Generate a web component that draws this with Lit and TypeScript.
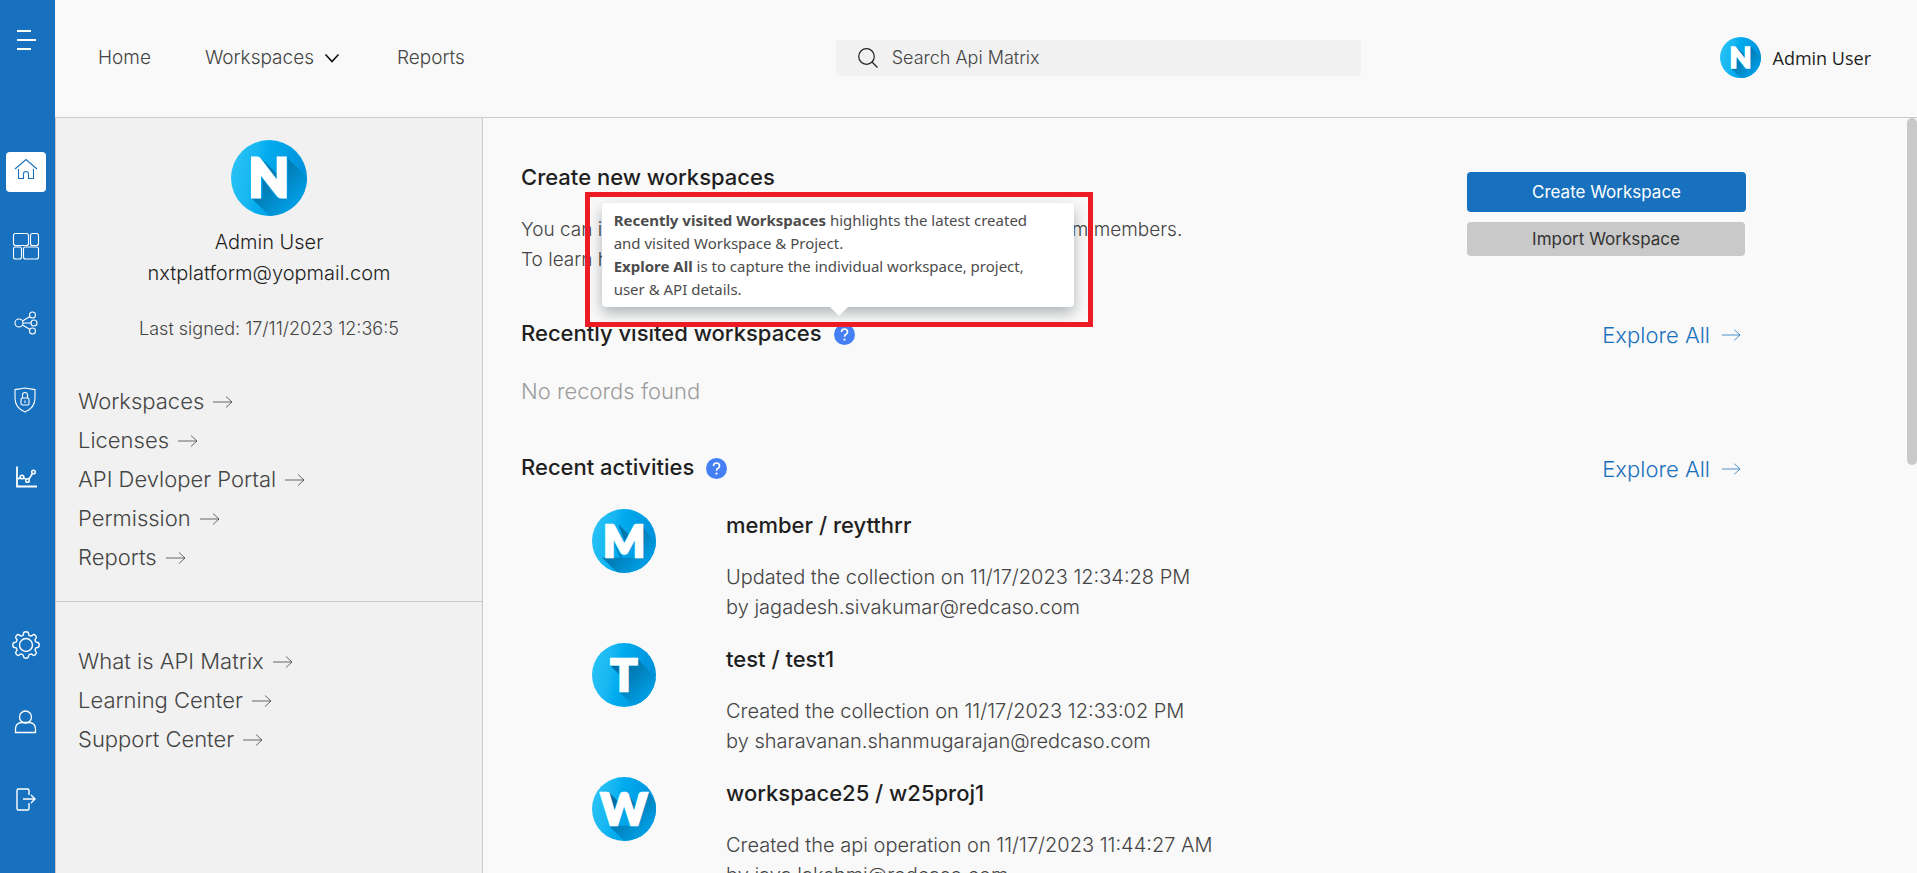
import { LitElement, html, svg, css } from "lit";
import { customElement, property } from "lit/decorators.js";

const SHADOWS: Record<string, string[]> = {
  N: ["20,57 38,75 75,75 75,37 56,18 56,57", "30,18 45,38 45,33", "31,38 31,57 45,57"],
  M: ["12,57 30,75 75,75 75,40 57,18 63,57", "31,18 39,40 45,32", "25,38 33,57 36,57"],
  T: ["32,57 50,75 75,75 75,42 53,18 53,27 42,27 42,57", "22,27 33,38 33,27"],
  W: ["20,57 38,75 75,75 75,30 66,18 53,57", "20,18 29,45 34,32", "40,18 47,45 51,32"],
};

@customElement("letter-avatar")
export class LetterAvatar extends LitElement {
  @property() letter = "N";

  static styles = css`
    :host { display: block; flex: none; }
    .disc { display: block; width: 100%; height: 100%; }
    .glyph { font-family: Lato, sans-serif; font-weight: 900; font-size: 52px; fill: #fff; stroke: #fff; stroke-width: 3px; }
  `;

  render() {
    return html`<svg class="disc" viewBox="0 0 75 75" role="img" aria-label=${this.letter}>
      <defs>
        <linearGradient id="face" x1="0" x2="1" y1="0" y2="0.2">
          <stop offset="0" stop-color="#2cc5f6" /><stop offset="0.35" stop-color="#17b7f2" />
          <stop offset="0.5" stop-color="#00abee" /><stop offset="1" stop-color="#0092dc" />
        </linearGradient>
        <linearGradient id="cast" gradientUnits="userSpaceOnUse" x1="28" y1="28" x2="62" y2="62">
          <stop offset="0" stop-color="#0070a3" /><stop offset="0.5" stop-color="#0082bd" />
          <stop offset="1" stop-color="#009ce2" />
        </linearGradient>
        <clipPath id="round"><circle cx="37.5" cy="37.5" r="37.5" /></clipPath>
      </defs>
      <g clip-path="url(#round)">
        <rect width="75" height="75" fill="url(#face)" />
        ${(SHADOWS[this.letter] ?? []).map((p) => svg`<polygon points=${p} fill="url(#cast)" />`)}
      </g>
      <text class="glyph" x="37.5" y="56" text-anchor="middle">${this.letter}</text>
    </svg>`;
  }
}

const arrow = () => html`<svg class="arrow" viewBox="0 0 20 12" aria-hidden="true">
  <path d="M0 6H19M13 .5 19 6 13 11.5" fill="none" stroke="currentColor" stroke-width=".8" />
</svg>`;

const ICONS = {
  menu: svg`<path stroke-width="1.8" d="M5 5H19M5 14H24M5 23H19" />`,
  home: svg`<path d="M3 13 14 3.5 25 13M6.500 13V22.500H11.500V18a2.500 2.500 0 0 1 5 0V22.500H21.500V13" />`,
  grid: svg`<rect x="1.500" y="1.500" width="15" height="12" rx="2" /><rect x="18.500" y="1.500" width="8" height="12" rx="2" /><rect x="1.500" y="15" width="8" height="12" rx="2" /><rect x="11.500" y="15" width="15" height="12" rx="2" />`,
  share: svg`<circle cx="7" cy="14" r="4" /><circle cx="20.500" cy="6" r="3" /><circle cx="22" cy="14" r="3" /><circle cx="20.500" cy="22" r="3" /><path d="M10.500 12 18 7.500M11 14H19M10.500 16 18 20.500" />`,
  shield: svg`<path d="M13 2C9 3 6 3 3 3.500V12C3 19 7 23.500 13 26C19 23.500 23 19 23 12V3.500C20 3 17 3 13 2Z" /><rect x="9" y="12" width="8" height="7" rx="1.500" /><path d="M10.500 12V9a2.500 2.500 0 0 1 5 0V12M13 14.500V17" />`,
  chart: svg`<path stroke-width="1.800" d="M5 3.500V23.500H25" /><path stroke-width="1.500" d="M6 16 8.500 14.500M11.500 14.500 14 16.500M17 16 20.500 10.500" /><circle cx="10" cy="14" r="1.800" stroke-width="1.500" /><circle cx="15.500" cy="17.500" r="1.800" stroke-width="1.500" /><circle cx="21.500" cy="9" r="1.800" stroke-width="1.500" />`,
  gear: svg`<circle cx="14" cy="14" r="6.500" stroke-width="1.400" /><path stroke-width="1.400" stroke-linejoin="round" d="M11.500 2.500Q11.700 .8 14 .8T16.500 2.500Q16.500 4.500 18.300 4.900Q19.600 5.300 20.800 4Q22 3 23.500 4.500T24 7.200Q22.700 8.500 23.100 9.700Q23.500 11.500 25.500 11.500Q27.200 11.700 27.200 14T25.500 16.500Q23.500 16.500 23.100 18.300Q22.700 19.500 24 20.800Q25 22 23.500 23.500T20.800 24Q19.600 22.700 18.300 23.100Q16.500 23.500 16.500 25.500Q16.300 27.200 14 27.200T11.500 25.500Q11.500 23.500 9.700 23.100Q8.500 22.700 7.200 24Q6 25 4.500 23.500T4 20.800Q5.300 19.500 4.900 18.300Q4.500 16.500 2.500 16.500Q.8 16.300 .8 14T2.500 11.500Q4.500 11.500 4.900 9.700Q5.300 8.500 4 7.200Q3 6 4.500 4.500T7.200 4Q8.500 5.300 9.700 4.900Q11.500 4.500 11.500 2.500Z" />`,
  user: svg`<circle cx="13.500" cy="9" r="6" stroke-width="1.300" /><path stroke-width="1.300" d="M9.500 14.500C5.500 15 3.500 18 3.500 21V24.500H23.500V21C23.500 18 21.500 15 17.500 14.500H9.500" />`,
  exit: svg`<path stroke-width="1.400" d="M17 10V5.500Q17 4 15.500 4H6.500Q5 4 5 5.500V23.500Q5 25 6.500 25H15.500Q17 25 17 23.500V18M11 14H23M19 10 23 14 19 18" />`,
};

const icon = (name: keyof typeof ICONS) =>
  html`<svg class="icon" viewBox="0 0 28 28" fill="none" stroke="currentColor" stroke-width="1.1" aria-hidden="true">${ICONS[name]}</svg>`;

const help = () => html`<svg class="help-mark" viewBox="0 0 21 21" aria-hidden="true">
  <circle cx="10.5" cy="10.5" r="10.5" fill="#4480f4" />
  <path d="M7.500 8Q7.500 5 10.500 5T13.500 8Q13.500 9.500 12 10.300Q10.500 11 10.500 12.800" fill="none" stroke="#fff" stroke-width="1.7" />
  <circle cx="10.5" cy="15.600" r="1.100" fill="#fff" />
</svg>`;

@customElement("app-root")
export class AppRoot extends LitElement {
  static styles = css`
    :host {
      display: flex; height: 100vh; overflow: hidden; background: #f9f9f9;
      font-family: Inter, sans-serif; font-weight: 300; font-size: 18px; line-height: 30px; color: #444;
    }
    * { box-sizing: border-box; }
    a { color: inherit; text-decoration: none; }
    button { font: inherit; color: inherit; border: 0; padding: 0; background: none; cursor: pointer; }
    h2, h3, p, ul { margin: 0; padding: 0; }
    ul { list-style: none; }

    .rail { flex: none; width: 55px; background: #1871be; color: #fff; display: flex; flex-direction: column; align-items: center; padding: 20px 3px 54px 0; }
    .rail-group { display: flex; flex-direction: column; align-items: center; gap: 37px; }
    .rail-top { margin-top: 92px; }
    .rail-bottom { margin-top: auto; }
    .rail-button { width: 40px; height: 40px; display: grid; place-items: center; border-radius: 4px; }
    .active { background: #fff; color: #1871be; align-items: start; padding-top: 4px; margin-bottom: -3px; }
    .icon { width: 28px; height: 28px; display: block; }

    .page { flex: 1; min-width: 0; display: flex; flex-direction: column; }
    .topbar { flex: none; height: 118px; border-bottom: 1px solid #c9c9c9; display: flex; align-items: center; justify-content: space-between; padding: 0 46px 2px 43px; }
    .nav { display: flex; gap: 54px; padding-right: 12px; font-size: 19px; }
    .nav-menu { display: flex; align-items: center; gap: 10px; padding-right: 3px; }
    .chevron { width: 16px; height: 10px; }
    .search { width: 525px; max-width: 40%; height: 36px; border-radius: 4px; background: #f1f1f1; display: flex; align-items: center; gap: 14px; padding: 0 22px; }
    .search-icon { flex: none; width: 20px; height: 20px; }
    .search-box { flex: 1; min-width: 0; border: 0; padding: 0; background: none; outline: 0; font: inherit; color: inherit; }
    .search-box::placeholder { color: #444; opacity: 1; }
    .account { display: flex; align-items: center; gap: 12px; color: #1f1f1f; font-family: "Open Sans", sans-serif; font-weight: 400; }
    .avatar-small { width: 41px; height: 41px; }

    .body { flex: 1; min-height: 0; display: flex; }
    .side { flex: none; width: 428px; background: #f1f1f1; border: solid #c9c9c9; border-width: 0 1px; }
    .profile { display: flex; flex-direction: column; align-items: center; padding-top: 22px; }
    .avatar-large { width: 76px; height: 76px; margin-bottom: 11px; }
    .profile-name { font-size: 20px; line-height: 31px; color: #1f1f1f; }
    .signed { margin-top: 25px; }
    .links { font-size: 22px; line-height: 39px; padding: 38px 22px 24px; }
    .links + .links { border-top: 1px solid #c9c9c9; padding-top: 40px; }
    .link { display: inline-flex; align-items: center; gap: 9px; }
    .arrow { width: 20px; height: 12px; }

    .main { flex: 1; min-width: 0; overflow: hidden; padding: 39px 161px 0 38px; }
    .title { font-size: 22px; line-height: 40px; font-weight: 500; color: #1f1f1f; }
    .intro { display: flex; justify-content: space-between; }
    .intro-text { margin-top: 18px; font-size: 19px; }
    .actions { width: 279px; display: flex; flex-direction: column; gap: 10px; padding-top: 15px; font-size: 17px; font-weight: 400; }
    .create { height: 40px; border-radius: 4px; background: #1871be; color: #fff; }
    .import { height: 34px; border-radius: 4px; background: #c9c9c9; color: #333; margin-right: 1px; }
    .section-head { display: flex; align-items: center; justify-content: space-between; }
    .visited { margin-top: 38px; }
    .recent { margin-top: 36px; }
    .title-row { display: flex; align-items: center; gap: 12px; }
    .title-row .title { padding-bottom: 3px; }
    .help { position: relative; width: 21px; height: 21px; }
    .help-mark { display: block; width: 21px; height: 21px; }
    .explore { display: inline-flex; align-items: center; gap: 12px; color: #1871be; font-size: 22px; padding-right: 5px; }
    .explore .arrow { width: 19px; }
    .empty { margin-top: 15px; font-size: 22px; line-height: 40px; color: #9c9c9c; }

    .tip { position: absolute; z-index: 2; left: -232px; bottom: 38px; width: 472px; background: #fff; border-radius: 4px; padding: 6px 36px 6px 12px; color: #4c4c4c; font: 400 15px/23px "Noto Sans", sans-serif; box-shadow: 0 6px 14px rgba(0, 20, 30, 0.3); }
    .tip::before { content: ""; position: absolute; left: 228px; top: 100%; border: solid transparent; border-width: 9px 9px 0; border-top-color: #fff; }
    .tip::after { content: ""; position: absolute; inset: -11px -19px -20px -17px; border: 5px solid #ed1c24; }

    .activities { margin-top: 19px; padding-left: 71px; }
    .activity { display: flex; gap: 70px; height: 134px; }
    .avatar-mid { width: 64px; height: 64px; }
    .activity-title { font-size: 22px; line-height: 32px; font-weight: 500; color: #1f1f1f; }
    .activity-text { font-size: 20px; margin-top: 21px; }

    .scroll { flex: none; width: 10px; }
    .thumb { height: 46%; border-radius: 5px; background: #c9c9c9; }
  `;

  private links = ["Workspaces", "Licenses", "API Devloper Portal", "Permission", "Reports"];
  private resources = ["What is API Matrix", "Learning Center", "Support Center"];
  private activities = [
    { letter: "M", title: "member / reytthrr", text: "Updated the collection on 11/17/2023 12:34:28 PM", by: "jagadesh.sivakumar@redcaso.com" },
    { letter: "T", title: "test / test1", text: "Created the collection on 11/17/2023 12:33:02 PM", by: "sharavanan.shanmugarajan@redcaso.com" },
    { letter: "W", title: "workspace25 / w25proj1", text: "Created the api operation on 11/17/2023 11:44:27 AM", by: "jaya.lakshmi@redcaso.com" },
  ];

  private railButton(name: keyof typeof ICONS, label: string, active = false) {
    return html`<button class="rail-button ${active ? "active" : ""}" aria-label=${label}>${icon(name)}</button>`;
  }

  private linkList(items: string[]) {
    return html`<ul class="links">${items.map((t) => html`<li><a class="link" href="#">${t}${arrow()}</a></li>`)}</ul>`;
  }

  render() {
    return html`
      <nav class="rail" aria-label="Sections">
        ${this.railButton("menu", "Menu")}
        <div class="rail-group rail-top">
          ${this.railButton("home", "Home", true)} ${this.railButton("grid", "Workspaces")}
          ${this.railButton("share", "Connections")} ${this.railButton("shield", "Permission")}
          ${this.railButton("chart", "Reports")}
        </div>
        <div class="rail-group rail-bottom">
          ${this.railButton("gear", "Settings")} ${this.railButton("user", "Profile")}
          ${this.railButton("exit", "Sign out")}
        </div>
      </nav>
      <div class="page">
        <header class="topbar">
          <nav class="nav" aria-label="Main">
            <a href="#">Home</a>
            <button class="nav-menu">Workspaces
              <svg class="chevron" viewBox="0 0 16 10" aria-hidden="true"><path d="M1.500 1.500 8 8.500 14.500 1.500" fill="none" stroke="#111" stroke-width="1.600" /></svg>
            </button>
            <a href="#">Reports</a>
          </nav>
          <label class="search">
            <svg class="search-icon" viewBox="0 0 20 20" aria-hidden="true"><circle cx="8.500" cy="8.500" r="7.800" fill="none" stroke="#222" stroke-width="1.200" /><path d="M14 14 19.500 19.500" stroke="#222" stroke-width="1.300" /></svg>
            <input class="search-box" type="search" aria-label="Search" placeholder="Search Api Matrix" />
          </label>
          <a class="account" href="#"><letter-avatar class="avatar-small" letter="N"></letter-avatar>Admin User</a>
        </header>
        <div class="body">
          <aside class="side">
            <div class="profile">
              <letter-avatar class="avatar-large" letter="N"></letter-avatar>
              <p class="profile-name">Admin User</p>
              <p class="profile-name">nxtplatform@yopmail.com</p>
              <p class="signed">Last signed: 17/11/2023 12:36:5</p>
            </div>
            ${this.linkList(this.links)} ${this.linkList(this.resources)}
          </aside>
          <main class="main">
            <section class="intro">
              <div>
                <h2 class="title">Create new workspaces</h2>
                <p class="intro-text">You can invite and collaborate in your workspaces with the team members.<br />To learn how to create a workspace, visit the center.</p>
              </div>
              <div class="actions">
                <button class="create">Create Workspace</button>
                <button class="import">Import Workspace</button>
              </div>
            </section>
            <section class="visited">
              <div class="section-head">
                <div class="title-row">
                  <h2 class="title">Recently visited workspaces</h2>
                  <div class="help">
                    <button aria-label="About recently visited workspaces" aria-describedby="visited-tip">${help()}</button>
                    <div class="tip" id="visited-tip" role="tooltip">
                      <b>Recently visited Workspaces</b> highlights the latest created and visited Workspace &amp; Project.<br />
                      <b>Explore All</b> is to capture the individual workspace, project, user &amp; API details.
                    </div>
                  </div>
                </div>
                <a class="explore" href="#">Explore All${arrow()}</a>
              </div>
              <p class="empty">No records found</p>
            </section>
            <section class="recent">
              <div class="section-head">
                <div class="title-row">
                  <h2 class="title">Recent activities</h2>
                  <button class="help" aria-label="About recent activities">${help()}</button>
                </div>
                <a class="explore" href="#">Explore All${arrow()}</a>
              </div>
              <ul class="activities">
                ${this.activities.map((a) => html`<li class="activity">
                  <letter-avatar class="avatar-mid" letter=${a.letter}></letter-avatar>
                  <div>
                    <h3 class="activity-title">${a.title}</h3>
                    <p class="activity-text">${a.text}<br />by ${a.by}</p>
                  </div>
                </li>`)}
              </ul>
            </section>
          </main>
          <div class="scroll" aria-hidden="true"><div class="thumb"></div></div>
        </div>
      </div>
    `;
  }
}
